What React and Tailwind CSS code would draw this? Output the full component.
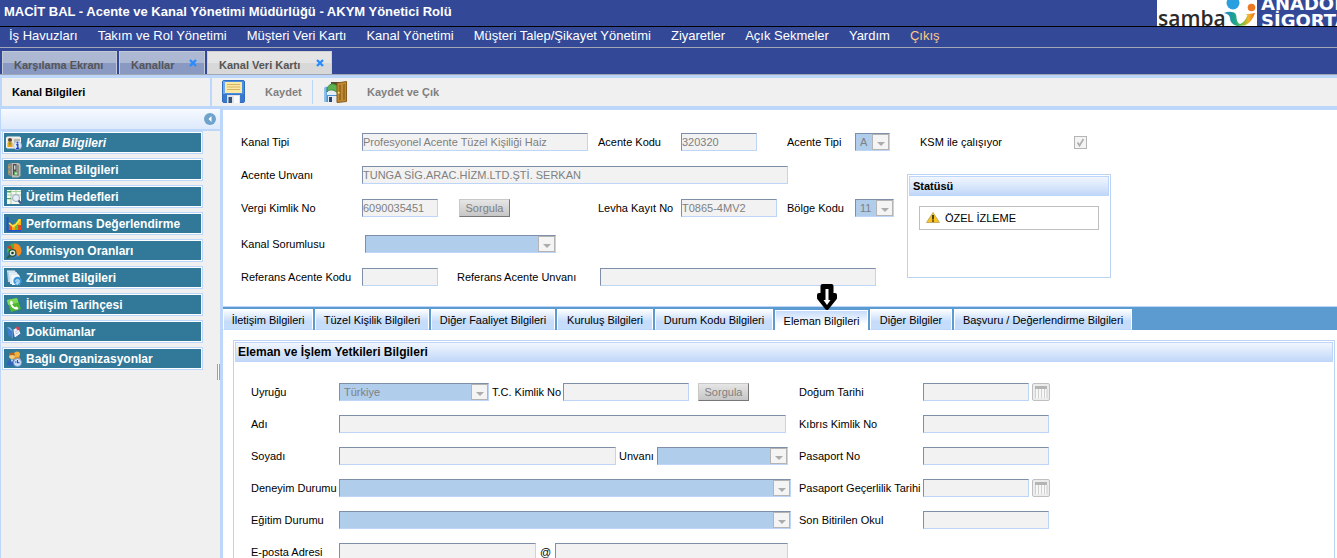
import React from 'react';
import clsx from 'clsx';

const menuItems = [
  'İş Havuzları',
  'Takım ve Rol Yönetimi',
  'Müşteri Veri Kartı',
  'Kanal Yönetimi',
  'Müşteri Talep/Şikayet Yönetimi',
  'Ziyaretler',
  'Açık Sekmeler',
  'Yardım',
];

const pageTabs = [
  { title: 'Karşılama Ekranı', width: 'w-[115px]' },
  { title: 'Kanallar', width: 'w-[86px]', closable: true },
  { title: 'Kanal Veri Kartı', width: 'w-[125px]', closable: true, active: true },
];

const detailTabs = [
  { title: 'İletişim Bilgileri', width: 'w-[92px]' },
  { title: 'Tüzel Kişilik Bilgileri', width: 'w-[116px]' },
  { title: 'Diğer Faaliyet Bilgileri', width: 'w-[126px]' },
  { title: 'Kuruluş Bilgileri', width: 'w-[98px]' },
  { title: 'Durum Kodu Bilgileri', width: 'w-[120px]' },
  { title: 'Eleman Bilgileri', width: 'w-[95px]', active: true },
  { title: 'Diğer Bilgiler', width: 'w-[84px]' },
  { title: 'Başvuru / Değerlendirme Bilgileri', width: 'w-[180px]' },
];

/* ---------- Icons ---------- */

const CardIcon = () => (
  <svg width="16" height="16" viewBox="0 0 16 16">
    <rect x="0.5" y="2" width="14" height="11" rx="1" fill="#e9e6dc" stroke="#f8f8f8" />
    <circle cx="4" cy="5" r="2" fill="#5b4632" />
    <path d="M1.500 12V8.500q0-2 2.500-2t2.500 2v3.500z" fill="#e8a321" />
    <path d="M3.200 7.500h1.600L4 11z" fill="#3c8d3f" />
    <path d="M8 5h6M8 7h3" stroke="#8a8a8a" />
    <circle cx="11.500" cy="10.500" r="4" fill="#dfe9f8" stroke="#a9b9d3" strokeWidth="0.700" />
    <path d="M10.300 9.700h1.500v3.500M10 13.500h3.400" stroke="#1b48c8" strokeWidth="1.400" fill="none" />
    <circle cx="11.500" cy="7.700" r="1" fill="#1b48c8" />
  </svg>
);

const SafeIcon = () => (
  <svg width="16" height="16" viewBox="0 0 16 16">
    <path d="M2 2l4-1.500v14L2 13z" fill="#8c8c86" />
    <path d="M6 1h7l1.500 2v11L12 15.500H6z" fill="#b9bab4" />
    <path d="M7 2h3.500v11H7z" fill="#4e504e" />
    <path d="M8 3.500h1.500v4H8z" fill="#cfd3cf" />
    <path d="M12 3v11" stroke="#80827e" strokeWidth="1.500" />
    <circle cx="3.200" cy="5" r="1" fill="#d9a030" />
    <circle cx="3.200" cy="10" r="1" fill="#d9a030" />
    <path d="M8 9.500h4v4H8z" fill="#63a866" />
    <circle cx="10" cy="11.500" r="1" fill="#d6efcf" />
  </svg>
);

const SheetIcon = () => (
  <svg width="16" height="16" viewBox="0 0 16 16">
    <rect x="1" y="1" width="14" height="14" fill="#f3f8f0" />
    <path d="M1 2.500h14M1 6h14M1 10h8M5 1v14M10 1v5" stroke="#a9cfa5" />
    <path d="M1 2h4v1.500H1zM1 9h4v1H1z" fill="#58a457" />
    <circle cx="10" cy="9" r="3.500" fill="#e3ebf6" fillOpacity="0.900" stroke="#9caac0" />
    <path d="M12.500 11.500l2.500 3" stroke="#3f5787" strokeWidth="2" />
  </svg>
);

const ChartIcon = () => (
  <svg width="16" height="16" viewBox="0 0 16 16">
    <path d="M1.500 1v13.500H15" stroke="#2450c8" strokeWidth="2" fill="none" />
    <path d="M3 6l3 3v5H3z" fill="#e94d22" />
    <path d="M6 9l3-1.500V14H6z" fill="#f5a51c" />
    <path d="M9 7.500l3-4h3V14H9z" fill="#5fc231" />
    <path d="M12 3h3v6h-3z" fill="#f7b51c" />
    <path d="M3 7l4 3.500 3-2 4-5" stroke="#ffe94a" strokeWidth="1.500" fill="none" />
    <path d="M12 9h3v5h-3z" fill="#e8461f" />
  </svg>
);

const PieIcon = () => (
  <svg width="16" height="16" viewBox="0 0 16 16">
    <circle cx="8" cy="7.500" r="7" fill="#3f87dc" />
    <path d="M8 7.500V0.500a7 7 0 0 1 4 13z" fill="#f28b1d" />
    <path d="M8 7.500L1.500 10A7 7 0 0 1 8 0.500z" fill="#45b43a" />
    <path d="M8 7.500L1.500 5A7 7 0 0 1 4 2z" fill="#d83a2b" />
    <circle cx="6.500" cy="10" r="3.400" fill="#d9ecdf" stroke="#29543a" strokeWidth="1.200" />
    <circle cx="6.500" cy="10" r="1.300" fill="#1c3325" />
    <path d="M4 12.500l-3 3" stroke="#2c5c3c" strokeWidth="1.800" />
  </svg>
);

const StackIcon = () => (
  <svg width="16" height="16" viewBox="0 0 16 16">
    <path d="M1 1h8l2 2v9H2z" fill="#b8d2e6" />
    <path d="M3 3h8l2 2v9H4z" fill="#dbe9f3" />
    <path d="M5 5h8l1 2v8H6z" fill="#f3f8fb" />
    <path d="M1 1h8M3 3h8" stroke="#eef5fa" />
    <circle cx="11.500" cy="11" r="4.200" fill="#3c97d8" />
    <path d="M9.500 11.500a2 2 0 1 1 2 2M11.500 12.300v2.400l-1.800-1.200z" stroke="#bfe3fa" fill="#bfe3fa" strokeWidth="0.800" fillOpacity="0.600" />
  </svg>
);

const PhoneIcon = () => (
  <svg width="16" height="16" viewBox="0 0 16 16">
    <path d="M1 3L11 1l4 11-10 3z" fill="#4fb82e" />
    <path d="M1 3L11 1l1.500 4.500L2 8z" fill="#7fd856" />
    <path d="M4 4.500l1.700-.8 1.500 2.600-1 1c.6 1.400 1.500 2.300 2.900 3l1.200-.9 2.200 1.700-.9 1.500C7.700 12.800 3.700 9.600 4 4.500z" fill="#fff" />
  </svg>
);

const BookIcon = () => (
  <svg width="16" height="16" viewBox="0 0 16 16">
    <path d="M1 3l5 3v8L2 11z" fill="#3f7fc9" />
    <path d="M1 3l3 .5 3 3v8l-1-.5V7z" fill="#8bbdec" />
    <path d="M7 6l5-3 2.500 7L9 14z" fill="#f4f6fb" />
    <path d="M7 6v8l2 0 5.500-4" stroke="#2e62a8" fill="none" />
    <path d="M10 2.500l4 1-.5 3-3-1z" fill="#d5405a" />
    <path d="M9 8l3-1.500M9.500 10l3-1.500" stroke="#9db3d6" strokeWidth="0.800" />
  </svg>
);

const PeopleIcon = () => (
  <svg width="16" height="16" viewBox="0 0 16 16">
    <circle cx="11" cy="3.500" r="3" fill="#f2b13a" />
    <path d="M6.500 11q0-5 4.500-5t4 5z" fill="#e58f20" />
    <circle cx="6" cy="5" r="3" fill="#f7cb7c" />
    <path d="M3 5q0-3.500 3-3.500T9 5Q6 3 3 5z" fill="#b5651d" />
    <path d="M0.500 14.500q0-6 5.500-6t5 6z" fill="#2f63b8" />
    <path d="M5 8.500h2l-1 3z" fill="#fff" />
    <circle cx="11.500" cy="11.500" r="4" fill="#cfe0f7" stroke="#6b95d6" strokeWidth="0.800" />
    <path d="M11.500 9v2.800h2M9 11h1.500" stroke="#2450a8" strokeWidth="1.100" fill="none" />
  </svg>
);

const SaveIcon = () => (
  <svg width="24" height="24" viewBox="0 0 24 24">
    <rect x="0.500" y="0.500" width="22" height="22" rx="1.500" fill="#4a8ee0" stroke="#2f6cc0" />
    <path d="M1 1h2v21H1z" fill="#6fa8ee" />
    <path d="M1 14h21v8H1z" fill="#3a78cc" />
    <rect x="3" y="2" width="17" height="11" fill="#fae9a4" />
    <path d="M5 4.500h13M5 7h13M5 9.500h13" stroke="#d6b264" />
    <rect x="5" y="15" width="13" height="8" fill="#dfe3e8" />
    <rect x="6.500" y="17" width="3.500" height="6" fill="#35537f" />
    <path d="M12 16h5v7h-5z" fill="#fafafa" />
  </svg>
);

const SaveExitIcon = () => (
  <svg width="24" height="24" viewBox="0 0 24 24">
    <path d="M7 2h9v6H7z" fill="#5c4a2c" />
    <rect x="0.500" y="7" width="14" height="15" rx="1" fill="#4a94d8" />
    <path d="M0.500 8l2-2v16h-2z" fill="#86bdec" />
    <rect x="3" y="10" width="10" height="5" fill="#e6eef6" />
    <rect x="4" y="16" width="10" height="6" fill="#e8ecf0" />
    <rect x="5" y="17" width="3" height="5" fill="#27466e" />
    <path d="M3 9Q5 3 10 4l4 2v7L10 10.500Q5 9 3 12z" fill="#5cb350" stroke="#2f7d33" strokeWidth="0.700" />
    <path d="M13 3l9.500-1.500v20L13 22.500z" fill="#bd8a34" stroke="#8a5a17" />
    <path d="M15 5l2-.3v15.300l-2 .3zM19 4.400l2-.3v15.300l-2 .3z" fill="#9f6d20" />
    <circle cx="14.800" cy="12.800" r="1" fill="#f7dc83" />
  </svg>
);

const SambaFigure = () => (
  <svg width="32" height="26" viewBox="0 0 32 26" className="shrink-0">
    <defs>
      <linearGradient id="figure" x1="0" x2="1" y1="0" y2="0">
        <stop offset="0" stopColor="#1e86cf" />
        <stop offset="0.350" stopColor="#1fa58a" />
        <stop offset="0.600" stopColor="#7cbf3a" />
        <stop offset="0.800" stopColor="#f6b42b" />
        <stop offset="1" stopColor="#ea6a24" />
      </linearGradient>
    </defs>
    <circle cx="9" cy="3" r="6.500" fill="#2a9fe0" />
    <circle cx="27.500" cy="7.500" r="3.800" fill="#ec7a24" />
    <path d="M0 13Q5 11 10 12.500 12.500 13.500 12.500 18 13 23 16 24 21 22 23.500 15L21 14.500 31 13Q28 22 21 25.500L13 26Q6 24 6 18 5.500 14 0 13z" fill="url(#figure)" />
  </svg>
);

const WarningIcon = () => (
  <svg width="14" height="12" viewBox="0 0 14 12">
    <path d="M7 0.500L13.500 10.500H0.500z" fill="#f7c325" stroke="#c9ae62" />
    <path d="M7 3v4.500M7 8.300v1.500" stroke="#2a2208" strokeWidth="1.600" />
  </svg>
);

const CloseMark = () => (
  <svg width="8" height="8" viewBox="0 0 8 8">
    <path d="M1 1l6 6M7 1L1 7" stroke="#2b8cff" strokeWidth="2.400" />
  </svg>
);

const navItems = [
  { title: 'Kanal Bilgileri', icon: CardIcon, active: true },
  { title: 'Teminat Bilgileri', icon: SafeIcon },
  { title: 'Üretim Hedefleri', icon: SheetIcon },
  { title: 'Performans Değerlendirme', icon: ChartIcon },
  { title: 'Komisyon Oranları', icon: PieIcon },
  { title: 'Zimmet Bilgileri', icon: StackIcon },
  { title: 'İletişim Tarihçesi', icon: PhoneIcon },
  { title: 'Dokümanlar', icon: BookIcon },
  { title: 'Bağlı Organizasyonlar', icon: PeopleIcon },
];

/* ---------- Form parts ---------- */

function Label({ htmlFor, className, children }) {
  return (
    <label htmlFor={htmlFor} className={clsx('shrink-0 whitespace-nowrap', className)}>
      {children}
    </label>
  );
}

function TextField({ id, value = '', className, ...rest }) {
  return (
    <input
      id={id}
      type="text"
      disabled
      defaultValue={value}
      className={clsx(
        'block h-[18px] shrink-0 border border-t-[#7f8fa9] border-l-[#7f8fa9] border-r-[#bdd6f8] border-b-[#bdd6f8] bg-[#f2f2f2] text-[#808080]',
        className
      )}
      {...rest}
    />
  );
}

function SelectField({ id, value = '', className }) {
  return (
    <div className={clsx('relative h-[18px] shrink-0', className)}>
      <select
        id={id}
        disabled
        defaultValue={value}
        className="block h-full w-full appearance-none border border-t-[#7f8fa9] border-l-[#7f8fa9] border-r-[#bdd6f8] border-b-[#bdd6f8] bg-[#b0cdec] pl-1 text-[#808080] opacity-100"
      >
        <option value={value}>{value}</option>
      </select>
      <span className="pointer-events-none absolute top-px right-px flex h-4 w-[17px] items-center justify-center border border-[#b4b4b4] bg-[#f4f4f4]">
        <svg width="8" height="4" viewBox="0 0 8 4" className="mt-1">
          <path d="M0 0h8L4 4z" fill="#acacac" />
        </svg>
      </span>
    </div>
  );
}

function QueryButton({ className }) {
  return (
    <button
      type="button"
      disabled
      className={clsx(
        'h-[18px] w-[51px] shrink-0 border border-t-[#c8c8c8] border-l-[#c8c8c8] border-r-[#777] border-b-[#777] bg-linear-to-b from-[#e6e6e6] to-[#c6c6c6] leading-4 text-[#808080]',
        className
      )}
    >
      Sorgula
    </button>
  );
}

function CalendarButton({ label }) {
  return (
    <button
      type="button"
      disabled
      aria-label={label}
      className="ml-[3px] flex h-[18px] w-[18px] shrink-0 items-center justify-center rounded-xs border border-[#c0c0c0] bg-[#ececec]"
    >
      <svg width="14" height="14" viewBox="0 0 14 14">
        <rect x="1" y="1" width="12" height="12" fill="#f8f8f8" />
        <path d="M1 1h12v3H1z" fill="#b4b4b4" />
        <path d="M1.500 4v9M4.500 4v9M7.500 4v9M10.500 4v9M13 4v9" stroke="#cfcfcf" />
      </svg>
    </button>
  );
}

function Row({ className, children }) {
  return <div className={clsx('flex h-[18px] items-center', className)}>{children}</div>;
}

/* ---------- Page parts ---------- */

function Header() {
  return (
    <header className="bg-[#334998] text-white">
      <div className="flex h-[27px] justify-between overflow-hidden border-b border-black">
        <h1 className="pl-1 text-[13px] leading-6 font-bold whitespace-nowrap">
          MACİT BAL - Acente ve Kanal Yönetimi Müdürlüğü - AKYM Yönetici Rolü
        </h1>
        <div className="flex h-[26px] w-[180px] shrink-0 overflow-hidden">
          <div className="flex w-[100px] shrink-0 bg-white">
            <span className="w-[67px] shrink-0 pt-1 pl-px font-['Open_Sans',sans-serif] text-[21px] leading-7 font-semibold text-[#2b2b2b]">
              samba
            </span>
            <SambaFigure />
          </div>
          <div className="flex h-[29px] flex-col justify-end pl-1 font-['DejaVu_Sans',sans-serif] text-[18px] leading-[17px] font-bold">
            <span>ANADOLU</span>
            <span>SİGORTA</span>
          </div>
        </div>
      </div>
      <nav className="flex h-[21px] gap-5 border-b border-[#a3a7b5] pl-[9px] text-[13px] leading-[18px] whitespace-nowrap">
        {menuItems.map((item) => (
          <a key={item} href="#">{item}</a>
        ))}
        <a href="#" className="text-[#ffcb85]">Çıkış</a>
      </nav>
      <div className="flex h-[27px] items-end gap-0.5 border-b border-[#a0a6b4] pl-0.5 font-bold">
        {pageTabs.map((tab) => (
          <div
            key={tab.title}
            className={clsx(
              'flex h-[23px] items-start justify-between border border-b-0 pt-[3px] pr-[7px] pl-[11px] whitespace-nowrap',
              tab.width,
              tab.active
                ? 'border-[#d0d0d0] bg-linear-to-b from-[#e4e4e4] from-50% to-[#d8d8d8] to-50% text-[#555]'
                : 'border-[#c3c9d6] bg-linear-to-b from-[#adb8d3] from-50% to-[#8a99c2] to-50% text-[#555]'
            )}
          >
            <a href="#" className="pt-0.5 leading-4">{tab.title}</a>
            {tab.closable && (
              <button type="button" aria-label={`${tab.title} kapat`} className="mt-1">
                <CloseMark />
              </button>
            )}
          </div>
        ))}
      </div>
    </header>
  );
}

function Toolbar() {
  return (
    <div className="flex h-7 gap-0.5 pl-0.5 font-bold">
      <div className="w-[208px] shrink-0 bg-[#f0f0f0] pl-2.5 leading-7">Kanal Bilgileri</div>
      <div className="flex flex-1 items-center bg-[#f0f0f0] pl-2.5 text-[#808080]">
        <button type="button" disabled className="flex h-6 w-[90px] items-center gap-[19px]">
          <SaveIcon />
          Kaydet
        </button>
        <div className="h-6 w-px bg-[#bdd7fa]" />
        <button type="button" disabled className="flex h-6 items-center gap-[19px] pl-[11px]">
          <SaveExitIcon />
          Kaydet ve Çık
        </button>
      </div>
    </div>
  );
}

function Sidebar() {
  return (
    <aside className="relative flex w-[219px] shrink-0 flex-col bg-[#f0f0f0]">
      <div className="flex h-[22px] items-center justify-end border-b-2 border-[#bdd7fa] bg-linear-to-b from-[#f6faff] to-[#dde9fb] pr-1">
        <button type="button" aria-label="Daralt">
          <svg width="12" height="12" viewBox="0 0 12 12">
            <circle cx="6" cy="6" r="6" fill="#6fa3cc" />
            <path d="M7.500 3v6l-3-3z" fill="#fff" />
          </svg>
        </button>
      </div>
      <nav className="flex flex-col gap-1 pl-px">
        {navItems.map(({ title, icon: Icon, active }) => (
          <div key={title} className="h-[23px] w-[201px] border border-[#bdd7fa]">
            <a
              href="#"
              className={clsx(
                'flex h-full items-center gap-1 border border-white bg-[#317899] pl-0.5 text-[12px] font-bold text-white',
                active && 'italic'
              )}
            >
              <Icon />
              {title}
            </a>
          </div>
        ))}
      </nav>
      {/* splitter handle */}
      <div className="absolute top-[255px] right-0 h-4 w-[3px] border-x border-[#a0a0a0] bg-white" />
    </aside>
  );
}

function ChannelForm() {
  return (
    <section className="flex h-[196px] shrink-0 pt-[23px] pl-[18px]">
      <div className="flex w-[666px] shrink-0 flex-col gap-[15px]">
        <Row>
          <Label htmlFor="kanalTipi" className="w-[121px]">Kanal Tipi</Label>
          <TextField id="kanalTipi" value="Profesyonel Acente Tüzel Kişiliği Haiz" className="w-[226px]" />
          <Label htmlFor="acenteKodu" className="ml-2.5 w-[83px]">Acente Kodu</Label>
          <TextField id="acenteKodu" value="320320" className="w-[76px]" />
          <Label htmlFor="acenteTipi" className="ml-[30px] w-[68px]">Acente Tipi</Label>
          <SelectField id="acenteTipi" value="A" className="w-[35px]" />
        </Row>
        <Row>
          <Label htmlFor="acenteUnvani" className="w-[121px]">Acente Unvanı</Label>
          <TextField id="acenteUnvani" value="TUNGA SİG.ARAC.HİZM.LTD.ŞTİ. SERKAN" className="w-[426px]" />
        </Row>
        <Row>
          <Label htmlFor="vergiNo" className="w-[121px]">Vergi Kimlik No</Label>
          <TextField id="vergiNo" value="6090035451" className="w-[76px]" />
          <QueryButton className="ml-[21px]" />
          <Label htmlFor="levhaNo" className="ml-[88px] w-[83px]">Levha Kayıt No</Label>
          <TextField id="levhaNo" value="T0865-4MV2" className="w-[96px]" />
          <Label htmlFor="bolgeKodu" className="ml-2.5 w-[68px]">Bölge Kodu</Label>
          <SelectField id="bolgeKodu" value="11" className="w-[39px]" />
        </Row>
        <Row className="mt-[3px]">
          <Label htmlFor="sorumlu" className="w-[124px]">Kanal Sorumlusu</Label>
          <SelectField id="sorumlu" className="w-[191px]" />
        </Row>
        <Row>
          <Label htmlFor="refKod" className="w-[121px]">Referans Acente Kodu</Label>
          <TextField id="refKod" className="w-[76px]" />
          <Label htmlFor="refUnvan" className="ml-[19px] w-[143px]">Referans Acente Unvanı</Label>
          <TextField id="refUnvan" className="w-[276px]" />
        </Row>
      </div>
      <div className="w-[204px] shrink-0">
        <div className="flex h-[18px] items-center justify-between pr-6 pl-[13px]">
          <Label htmlFor="ksm">KSM ile çalışıyor</Label>
          <span className="relative block h-[13px] w-[13px]">
            <input
              id="ksm"
              type="checkbox"
              defaultChecked
              disabled
              className="block h-full w-full appearance-none border border-[#b4b4b4] bg-[#f4f4f4]"
            />
            <svg width="13" height="13" viewBox="0 0 13 13" className="pointer-events-none absolute inset-0">
              <path d="M3.500 6.500l2 3 4-6.500" stroke="#b0b0b0" strokeWidth="1.800" fill="none" />
            </svg>
          </span>
        </div>
        <div className="mt-[23px] h-[104px] border border-[#bdd3f5]">
          <h2 className="m-px h-5 border border-[#bdd7fa] bg-linear-to-b from-[#f1f6fe] to-[#c2d8f8] pl-[3px] leading-[18px] font-bold">
            Statüsü
          </h2>
          <div className="mx-[11px] mt-2.5 flex h-6 items-center gap-[5px] border border-[#bfbfbf] pl-1.5">
            <WarningIcon />
            ÖZEL İZLEME
          </div>
        </div>
      </div>
    </section>
  );
}

function DetailTabs() {
  return (
    <div className="relative flex h-6 shrink-0 border-t border-[#bdd7fa] bg-[#5b9bcf]">
      {detailTabs.map((tab) => (
        <a
          key={tab.title}
          href="#"
          className={clsx('flex h-[23px] shrink-0 border-r-2 border-[#5b9bcf]', tab.active ? 'pt-[3px]' : 'pt-0.5', tab.width)}
        >
          <span
            className={clsx(
              'flex flex-1 items-center justify-center border border-white whitespace-nowrap',
              tab.active
                ? 'border-b-0 bg-linear-to-b from-[#c6dcfb] to-white to-70%'
                : 'border-b-[#bdd7fa] bg-linear-to-b from-[#fbfdff] to-[#c6dcfb] to-60%'
            )}
          >
            {tab.title}
          </span>
        </a>
      ))}
      {/* pointer over the active tab */}
      <svg width="22" height="28" viewBox="0 0 22 28" className="absolute -top-6 left-[593px]">
        <path d="M6.500 3h9v9h3.500v3L11 25 3 15v-3h3.500z" fill="#000" stroke="#000" strokeWidth="4" strokeLinejoin="round" />
        <path d="M9.500 6h3v11h2l-3.500 5-3.500-5h2z" fill="#fff" />
      </svg>
    </div>
  );
}

function StaffForm() {
  return (
    <section className="mt-2.5 mr-0.5 ml-2.5 flex-1 border border-[#bdd3f5]">
      <h2 className="m-px h-5 border border-[#bdd7fa] bg-linear-to-b from-[#f1f6fe] to-[#c2d8f8] pl-0.5 text-[12px] leading-[18px] font-bold">
        Eleman ve İşlem Yetkileri Bilgileri
      </h2>
      <div className="flex pt-5 pl-[17px]">
        <div className="flex w-[548px] shrink-0 flex-col gap-3.5">
          <Row>
            <Label htmlFor="uyruk" className="w-[88px]">Uyruğu</Label>
            <SelectField id="uyruk" value="Türkiye" className="w-[150px]" />
            <Label htmlFor="tcNo" className="ml-[3px] w-[71px]">T.C. Kimlik No</Label>
            <TextField id="tcNo" className="w-[126px]" />
            <QueryButton className="ml-[9px]" />
          </Row>
          <Row>
            <Label htmlFor="adi" className="w-[88px]">Adı</Label>
            <TextField id="adi" className="w-[447px]" />
          </Row>
          <Row>
            <Label htmlFor="soyadi" className="w-[88px]">Soyadı</Label>
            <TextField id="soyadi" className="w-[277px]" />
            <Label htmlFor="unvani" className="ml-[3px] w-[38px]">Unvanı</Label>
            <SelectField id="unvani" className="w-[131px]" />
          </Row>
          <Row>
            <Label htmlFor="deneyim" className="w-[88px]">Deneyim Durumu</Label>
            <SelectField id="deneyim" className="w-[452px]" />
          </Row>
          <Row>
            <Label htmlFor="egitim" className="w-[88px]">Eğitim Durumu</Label>
            <SelectField id="egitim" className="w-[452px]" />
          </Row>
          <Row>
            <Label htmlFor="eposta" className="w-[88px]">E-posta Adresi</Label>
            <TextField id="eposta" className="w-[197px]" />
            <span className="w-[19px] text-center">@</span>
            <TextField id="epostaAlan" aria-label="E-posta alan adı" className="w-[233px]" />
          </Row>
        </div>
        <div className="flex flex-col gap-3.5">
          <Row>
            <Label htmlFor="dogum" className="w-[124px]">Doğum Tarihi</Label>
            <TextField id="dogum" className="w-[106px]" />
            <CalendarButton label="Doğum tarihi seç" />
          </Row>
          <Row>
            <Label htmlFor="kibrisNo" className="w-[124px]">Kıbrıs Kimlik No</Label>
            <TextField id="kibrisNo" className="w-[126px]" />
          </Row>
          <Row>
            <Label htmlFor="pasaportNo" className="w-[124px]">Pasaport No</Label>
            <TextField id="pasaportNo" className="w-[126px]" />
          </Row>
          <Row>
            <Label htmlFor="pasaportTarih" className="w-[124px]">Pasaport Geçerlilik Tarihi</Label>
            <TextField id="pasaportTarih" className="w-[106px]" />
            <CalendarButton label="Pasaport tarihi seç" />
          </Row>
          <Row>
            <Label htmlFor="okul" className="w-[124px]">Son Bitirilen Okul</Label>
            <TextField id="okul" className="w-[126px]" />
          </Row>
        </div>
      </div>
    </section>
  );
}

export default function App() {
  return (
    <div className="flex h-screen flex-col overflow-hidden bg-[#bdd7fa] font-['Liberation_Sans',Arial,sans-serif] text-[11px] leading-4 text-black">
      <Header />
      <div className="flex min-h-0 flex-1 flex-col gap-[3px] pt-[3px]">
        <Toolbar />
        <div className="flex min-h-0 flex-1 gap-[3px] pl-px">
          <Sidebar />
          <main className="mt-px flex min-w-0 flex-1 flex-col bg-white">
            <ChannelForm />
            <DetailTabs />
            <StaffForm />
          </main>
        </div>
      </div>
    </div>
  );
}
